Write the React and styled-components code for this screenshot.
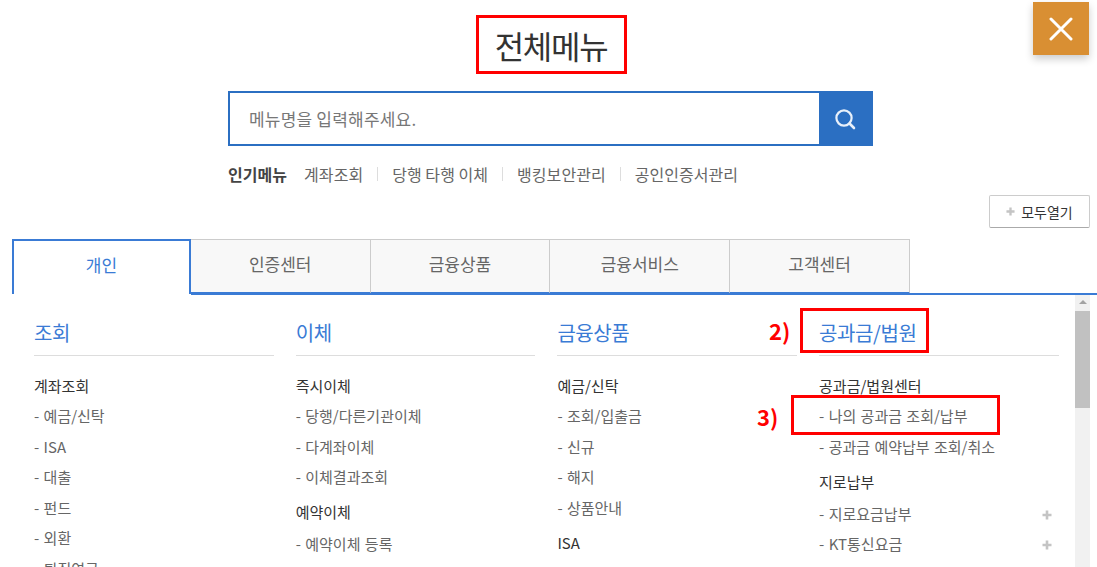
import React from 'react';
import styled, { createGlobalStyle } from 'styled-components';

const blue = '#2b6fc2';
const tabBlue = '#3a7bd5';

const columns = [
  {
    title: '조회',
    groups: [
      { name: '계좌조회', items: ['예금/신탁', 'ISA', '대출', '펀드', '외환', '퇴직연금'] },
    ],
  },
  {
    title: '이체',
    groups: [
      { name: '즉시이체', items: ['당행/다른기관이체', '다계좌이체', '이체결과조회'] },
      { name: '예약이체', items: ['예약이체 등록'] },
    ],
  },
  {
    title: '금융상품',
    groups: [
      { name: '예금/신탁', items: ['조회/입출금', '신규', '해지', '상품안내'] },
      { name: 'ISA', items: [] },
    ],
  },
  {
    title: '공과금/법원',
    note: '2)',
    groups: [
      {
        name: '공과금/법원센터',
        items: [{ label: '나의 공과금 조회/납부', note: '3)' }, '공과금 예약납부 조회/취소'],
      },
      {
        name: '지로납부',
        items: [
          { label: '지로요금납부', more: true },
          { label: 'KT통신요금', more: true },
        ],
      },
    ],
  },
];

const tabs = ['개인', '인증센터', '금융상품', '금융서비스', '고객센터'];
const popular = ['계좌조회', '당행 타행 이체', '뱅킹보안관리', '공인인증서관리'];

const App = () => {
  return (
    <Page>
      <GlobalStyle />
      <CloseButton aria-label="닫기">
        <svg width="24" height="24" viewBox="0 0 24 24">
          <path d="M2 2 L22 22 M22 2 L2 22" stroke="#fff" strokeWidth="3" strokeLinecap="round" />
        </svg>
      </CloseButton>

      <TitleRow>
        <Title>전체메뉴</Title>
      </TitleRow>

      <SearchBox>
        <SearchText>메뉴명을 입력해주세요.</SearchText>
        <SearchButton>
          <svg width="24" height="24" viewBox="0 0 24 24" fill="none">
            <circle cx="11" cy="11" r="7.6" stroke="#e8f0fa" strokeWidth="2.2" />
            <path d="M16.5 16.5 L21 21" stroke="#e8f0fa" strokeWidth="2.6" strokeLinecap="round" />
          </svg>
        </SearchButton>
      </SearchBox>

      <Popular>
        <PopularLabel>인기메뉴</PopularLabel>
        {popular.map((name) => (
          <PopularLink key={name}>{name}</PopularLink>
        ))}
      </Popular>

      <OpenAllRow>
        <OpenAll>
          <PlusIcon size={9} />
          모두열기
        </OpenAll>
      </OpenAllRow>

      <TabList>
        {tabs.map((tab, i) => (
          <Tab key={tab} $active={i === 0}>
            {tab}
          </Tab>
        ))}
      </TabList>

      <Body>
        <Columns>
          {columns.map((col) => (
            <Column key={col.title}>
              <ColumnHead>
                <ColumnTitle>
                  {col.title}
                  {col.note && <HeadMark />}
                  {col.note && <HeadNote>{col.note}</HeadNote>}
                </ColumnTitle>
              </ColumnHead>
              {col.groups.map((group) => (
                <Group key={group.name}>
                  <GroupName>{group.name}</GroupName>
                  {group.items.map((item) => {
                    const entry = typeof item === 'string' ? { label: item } : item;
                    return (
                      <Item key={entry.label}>
                        - {entry.label}
                        {entry.note && <ItemMark />}
                        {entry.note && <ItemNote>{entry.note}</ItemNote>}
                        {entry.more && (
                          <More>
                            <PlusIcon size={10} />
                          </More>
                        )}
                      </Item>
                    );
                  })}
                </Group>
              ))}
            </Column>
          ))}
        </Columns>
        <Scrollbar>
          <ScrollArrow />
          <ScrollThumb />
        </Scrollbar>
      </Body>
    </Page>
  );
};

const PlusIcon = ({ size }) => (
  <svg width={size} height={size} viewBox="0 0 10 10">
    <path d="M5 0.5 V9.5 M0.5 5 H9.5" stroke="#c4c4c4" strokeWidth="2.6" />
  </svg>
);

export default App;

const GlobalStyle = createGlobalStyle`
  html, body {
    margin: 0;
    padding: 0;
    height: 100%;
    overflow: hidden;
    background: #fff;
  }
  * {
    box-sizing: border-box;
  }
`;

const Page = styled.div`
  position: relative;
  width: 1097px;
  height: 567px;
  overflow: hidden;
  background: #fff;
  font-family: 'Noto Sans CJK KR', 'Noto Sans', sans-serif;
  color: #333;
`;

const CloseButton = styled.div`
  position: absolute;
  top: 2px;
  right: 8px;
  width: 56px;
  height: 53px;
  display: flex;
  align-items: center;
  justify-content: center;
  background: #d98f33;
  box-shadow: 0 4px 8px rgba(0, 0, 0, 0.2);
`;

const TitleRow = styled.div`
  display: flex;
  justify-content: center;
  padding: 15px 0 0 5px;
`;

const Title = styled.h1`
  margin: 0;
  width: 151px;
  height: 59px;
  display: flex;
  align-items: center;
  justify-content: center;
  border: 3px solid #f00;
  font-size: 32px;
  font-weight: 400;
  letter-spacing: -1.3px;
  color: #333;
`;

const SearchBox = styled.div`
  display: flex;
  width: 645px;
  height: 55px;
  margin: 17px 0 0 228px;
  border: 2px solid ${blue};
  border-right: 0;
`;

const SearchText = styled.div`
  flex: 1;
  display: flex;
  align-items: center;
  padding-left: 19px;
  font-size: 17px;
  letter-spacing: 0.2px;
  color: #777;
`;

const SearchButton = styled.div`
  width: 54px;
  margin: -2px 0;
  padding-right: 2px;
  display: flex;
  align-items: center;
  justify-content: center;
  background: ${blue};
`;

const Popular = styled.div`
  display: flex;
  align-items: center;
  height: 24px;
  margin: 16px 0 0 228px;
  font-size: 16px;
  letter-spacing: 0.05px;
`;

const PopularLabel = styled.strong`
  margin-right: 17px;
  font-weight: 700;
  color: #444;
`;

const PopularLink = styled.span`
  color: #666;
  padding-right: 14px;
  margin-right: 14px;
  border-right: 1px solid #ddd;
  line-height: 14px;

  &:last-child {
    border-right: 0;
  }
`;

const OpenAllRow = styled.div`
  display: flex;
  justify-content: flex-end;
  padding: 9px 7px 0 0;
`;

const OpenAll = styled.div`
  width: 101px;
  height: 33px;
  display: flex;
  align-items: center;
  justify-content: center;
  gap: 6px;
  border: 1px solid #ccc;
  border-bottom-color: #aaa;
  border-radius: 2px;
  font-size: 14px;
  color: #333;
`;

const TabList = styled.div`
  display: flex;
  height: 55px;
  margin: 11px 0 0 12px;
  width: 898px;
`;

const Tab = styled.div`
  width: ${(props) => (props.$active ? '179px' : '180px')};
  display: flex;
  align-items: center;
  justify-content: center;
  font-size: 17px;
  background: ${(props) => (props.$active ? '#fff' : '#f8f8f8')};
  color: ${(props) => (props.$active ? tabBlue : '#666')};
  border: ${(props) => (props.$active ? `2px solid ${tabBlue}` : '1px solid #ccc')};
  border-left-width: ${(props) => (props.$active ? '2px' : '0')};
  border-bottom: ${(props) => (props.$active ? '0' : `2px solid ${tabBlue}`)};
  padding-bottom: ${(props) => (props.$active ? '7px' : '5px')};
`;

const Body = styled.div`
  display: flex;
  height: 273px;
  padding-left: 12px;
  padding-right: 7px;
  position: relative;

  &::before {
    content: '';
    position: absolute;
    left: 191px;
    right: 0;
    top: -1px;
    height: 2px;
    background: ${tabBlue};
  }
`;

const Columns = styled.div`
  flex: 1;
  display: grid;
  grid-template-columns: repeat(4, 239.7px);
  column-gap: 22px;
  padding: 23px 0 0 22px;
  overflow: hidden;
`;

const Column = styled.div`
  min-width: 0;
`;

const ColumnHead = styled.div`
  height: 39px;
  border-bottom: 1px solid #ddd;
`;

const ColumnTitle = styled.div`
  position: relative;
  display: inline-block;
  font-size: 20px;
  line-height: 32px;
  color: ${tabBlue};
  letter-spacing: -0.4px;
`;

const HeadMark = styled.span`
  position: absolute;
  left: -19px;
  top: -9px;
  width: 129px;
  height: 45px;
  border: 3px solid #f00;
`;

const HeadNote = styled.span`
  position: absolute;
  left: -50px;
  top: -3px;
  font-size: 22px;
  line-height: 32px;
  font-weight: 700;
  letter-spacing: 0;
  color: #f00;
`;

const Group = styled.div`
  padding-top: 3.5px;

  &:nth-child(2) {
    padding-top: 14px;
  }
`;

const GroupName = styled.div`
  height: 30px;
  line-height: 32px;
  margin-bottom: 3px;
  font-size: 15px;
  color: #333;

  ${Group}:nth-child(2) > & {
    margin-bottom: 1px;
  }
`;

const Item = styled.div`
  position: relative;
  height: 30.5px;
  line-height: 30.5px;
  font-size: 15px;
  word-spacing: 1px;
  color: #666;
`;

const ItemMark = styled.span`
  position: absolute;
  left: -28px;
  top: -6px;
  width: 209px;
  height: 40px;
  border: 3px solid #f00;
`;

const ItemNote = styled.span`
  position: absolute;
  left: -62px;
  top: -1px;
  font-size: 22px;
  line-height: 32px;
  font-weight: 700;
  word-spacing: 0;
  color: #f00;
`;

const More = styled.span`
  position: absolute;
  right: 7px;
  top: 1px;
  height: 100%;
  display: flex;
  align-items: center;
`;

const Scrollbar = styled.div`
  width: 15px;
  flex: none;
  background: #f1f1f1;
  display: flex;
  flex-direction: column;
  align-items: center;
`;

const ScrollArrow = styled.div`
  margin-top: 6px;
  width: 0;
  height: 0;
  border-left: 4px solid transparent;
  border-right: 4px solid transparent;
  border-bottom: 4px solid #a3a3a3;
`;

const ScrollThumb = styled.div`
  margin-top: 7px;
  width: 100%;
  height: 97px;
  background: #c1c1c1;
`;
